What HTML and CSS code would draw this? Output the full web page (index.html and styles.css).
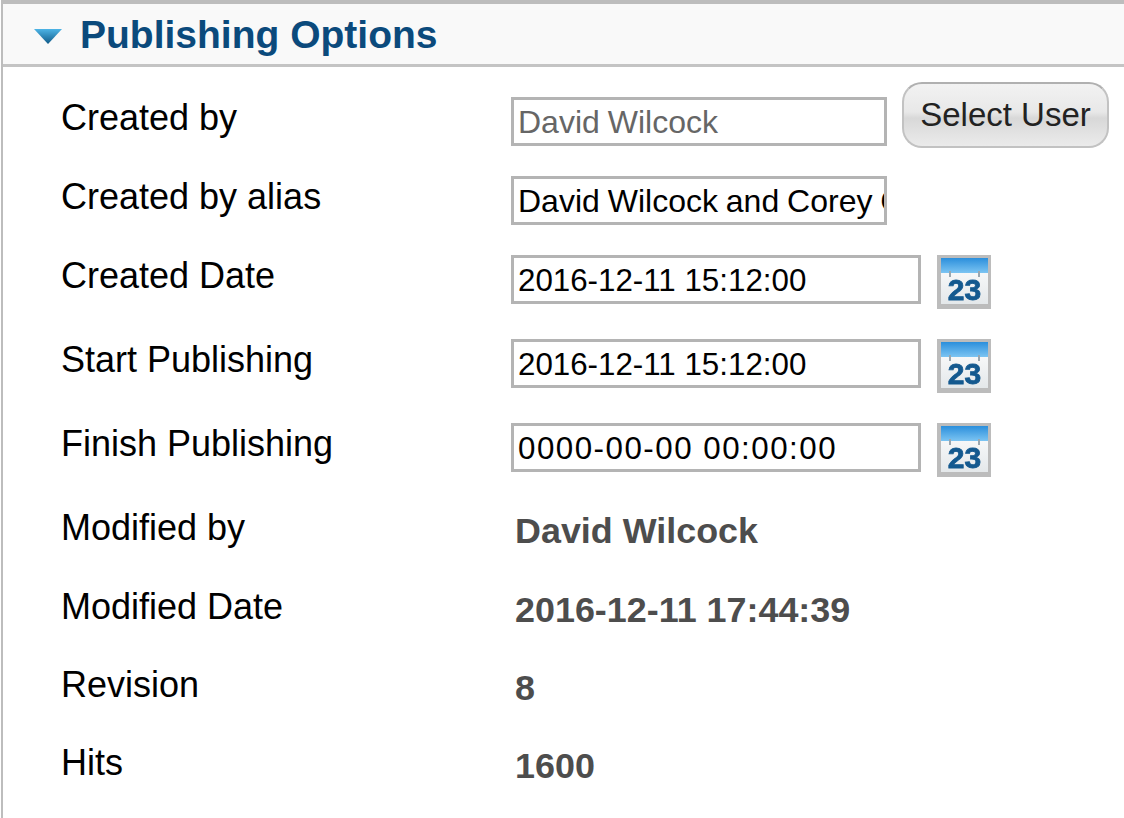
FILE: index.html
```html
<!DOCTYPE html>
<html lang="en">

<head>
  <meta charset="UTF-8" />
  <title>Publishing Options</title>
  <link rel="stylesheet" href="styles.css">
</head>

<body>
  <div class="panel">
    <h3 class="panel-title">
      <svg class="arrow" width="30" height="18" viewBox="0 0 30 18">
        <defs>
          <linearGradient id="arrowFill" x1="0" y1="0" x2="0" y2="1">
            <stop offset="0" stop-color="#4db4e6" />
            <stop offset="1" stop-color="#0f5a88" />
          </linearGradient>
        </defs>
        <path d="M1 2 H29 L15 17 Z" fill="url(#arrowFill)" />
      </svg>
      Publishing Options
    </h3>
    <div class="rows">
      <div class="row">
        <label>Created by</label>
        <input class="field field-short field-readonly" type="text" value="David Wilcock" readonly />
        <button class="btn-select" type="button">Select User</button>
      </div>
      <div class="row">
        <label>Created by alias</label>
        <input class="field field-short" type="text" value="David Wilcock and Corey Goode" />
      </div>
      <div class="row row-date">
        <label>Created Date</label>
        <input class="field field-date" type="text" value="2016-12-11 15:12:00" />
        <svg class="cal" viewBox="0 0 54 54"><use href="#calIcon" /></svg>
      </div>
      <div class="row row-date">
        <label>Start Publishing</label>
        <input class="field field-date" type="text" value="2016-12-11 15:12:00" />
        <svg class="cal" viewBox="0 0 54 54"><use href="#calIcon" /></svg>
      </div>
      <div class="row row-date">
        <label>Finish Publishing</label>
        <input class="field field-date field-zero" type="text" value="0000-00-00 00:00:00" />
        <svg class="cal" viewBox="0 0 54 54"><use href="#calIcon" /></svg>
      </div>
      <div class="row">
        <label>Modified by</label>
        <span class="info">David Wilcock</span>
      </div>
      <div class="row row-info">
        <label>Modified Date</label>
        <span class="info">2016-12-11 17:44:39</span>
      </div>
      <div class="row row-info">
        <label>Revision</label>
        <span class="info">8</span>
      </div>
      <div class="row row-info">
        <label>Hits</label>
        <span class="info">1600</span>
      </div>
    </div>
  </div>

  <svg class="defs" width="0" height="0">
    <defs>
      <linearGradient id="calTop" x1="0" y1="0" x2="0" y2="1">
        <stop offset="0" stop-color="#2b8fdc" />
        <stop offset="1" stop-color="#7cc4f2" />
      </linearGradient>
      <linearGradient id="calBody" x1="0" y1="0" x2="0" y2="1">
        <stop offset="0" stop-color="#ffffff" />
        <stop offset="1" stop-color="#e4e8ea" />
      </linearGradient>
      <g id="calIcon">
        <rect width="54" height="54" fill="#bcbcbc" />
        <rect x="4" y="3" width="47" height="46" fill="url(#calBody)" />
        <rect x="4" y="3" width="47" height="15" fill="url(#calTop)" />
        <rect x="12" y="16" width="2" height="6" fill="#9aa7b0" />
        <rect x="41" y="16" width="2" height="6" fill="#9aa7b0" />
        <text x="27.5" y="45" text-anchor="middle" class="cal-num">23</text>
      </g>
    </defs>
  </svg>
</body>

</html>
```

FILE: styles.css
```css
body {
  font-family: "Liberation Sans", Arial, sans-serif;
  background: #fff;
  margin: 0;
  overflow: hidden;
}

.panel {
  margin-left: 1px;
  border-top: 4px solid #bdbdbd;
  border-left: 2px solid #bdbdbd;
  height: 814px;
}

.panel-title {
  display: flex;
  align-items: center;
  gap: 17px;
  height: 58px;
  margin: 0;
  padding: 2px 0 0 30px;
  background: #f9f9f9;
  border-bottom: 3px solid #c4c4c4;
  color: #0b4a7c;
  font-size: 39px;
  font-weight: bold;
}

.arrow {
  margin-top: 2px;
}

.rows {
  padding: 31px 0 0 58px;
}

.row {
  display: flex;
  align-items: flex-start;
  height: 79px;
  color: #000;
}

.row label {
  width: 450px;
  flex: none;
  font-size: 36px;
  line-height: 40px;
}

.row-date {
  height: 84px;
}

.row-info {
  height: 78px;
}

.field {
  box-sizing: border-box;
  height: 49px;
  margin: -1px 0 0;
  padding: 2px 0 0 4px;
  border: 3px solid #b4b4b4;
  border-radius: 0;
  background: #fff;
  color: #000;
  font-family: "Liberation Sans", Arial, sans-serif;
  font-size: 32px;
  outline: none;
}

.field-short {
  width: 376px;
  word-spacing: -1px;
}

.field-date {
  width: 410px;
  font-size: 31.3px;
}

.field-zero {
  letter-spacing: 1.5px;
}

.field-readonly {
  color: #666;
}

.btn-select {
  height: 66px;
  width: 207px;
  margin: -16px 0 0 15px;
  padding: 0;
  border: 2px solid #c2c2c2;
  border-top-color: #b0b0b0;
  border-radius: 20px;
  background: linear-gradient(#f2f2f2, #e8e8e8 45%, #d8d8d8 55%, #ebebeb);
  color: #222;
  font-family: "Liberation Sans", Arial, sans-serif;
  font-size: 33px;
}

.cal {
  width: 54px;
  height: 54px;
  margin: -1px 0 0 16px;
  filter: blur(0.5px);
}

.cal-num {
  font-family: "Liberation Sans", Arial, sans-serif;
  font-size: 30px;
  font-weight: bold;
  fill: #14598f;
  stroke: #14598f;
  stroke-width: 0.8px;
}

.info {
  margin-left: 4px;
  font-size: 35.9px;
  font-weight: bold;
  line-height: 46px;
  color: #4d4d4d;
}

.defs {
  position: absolute;
}
```
